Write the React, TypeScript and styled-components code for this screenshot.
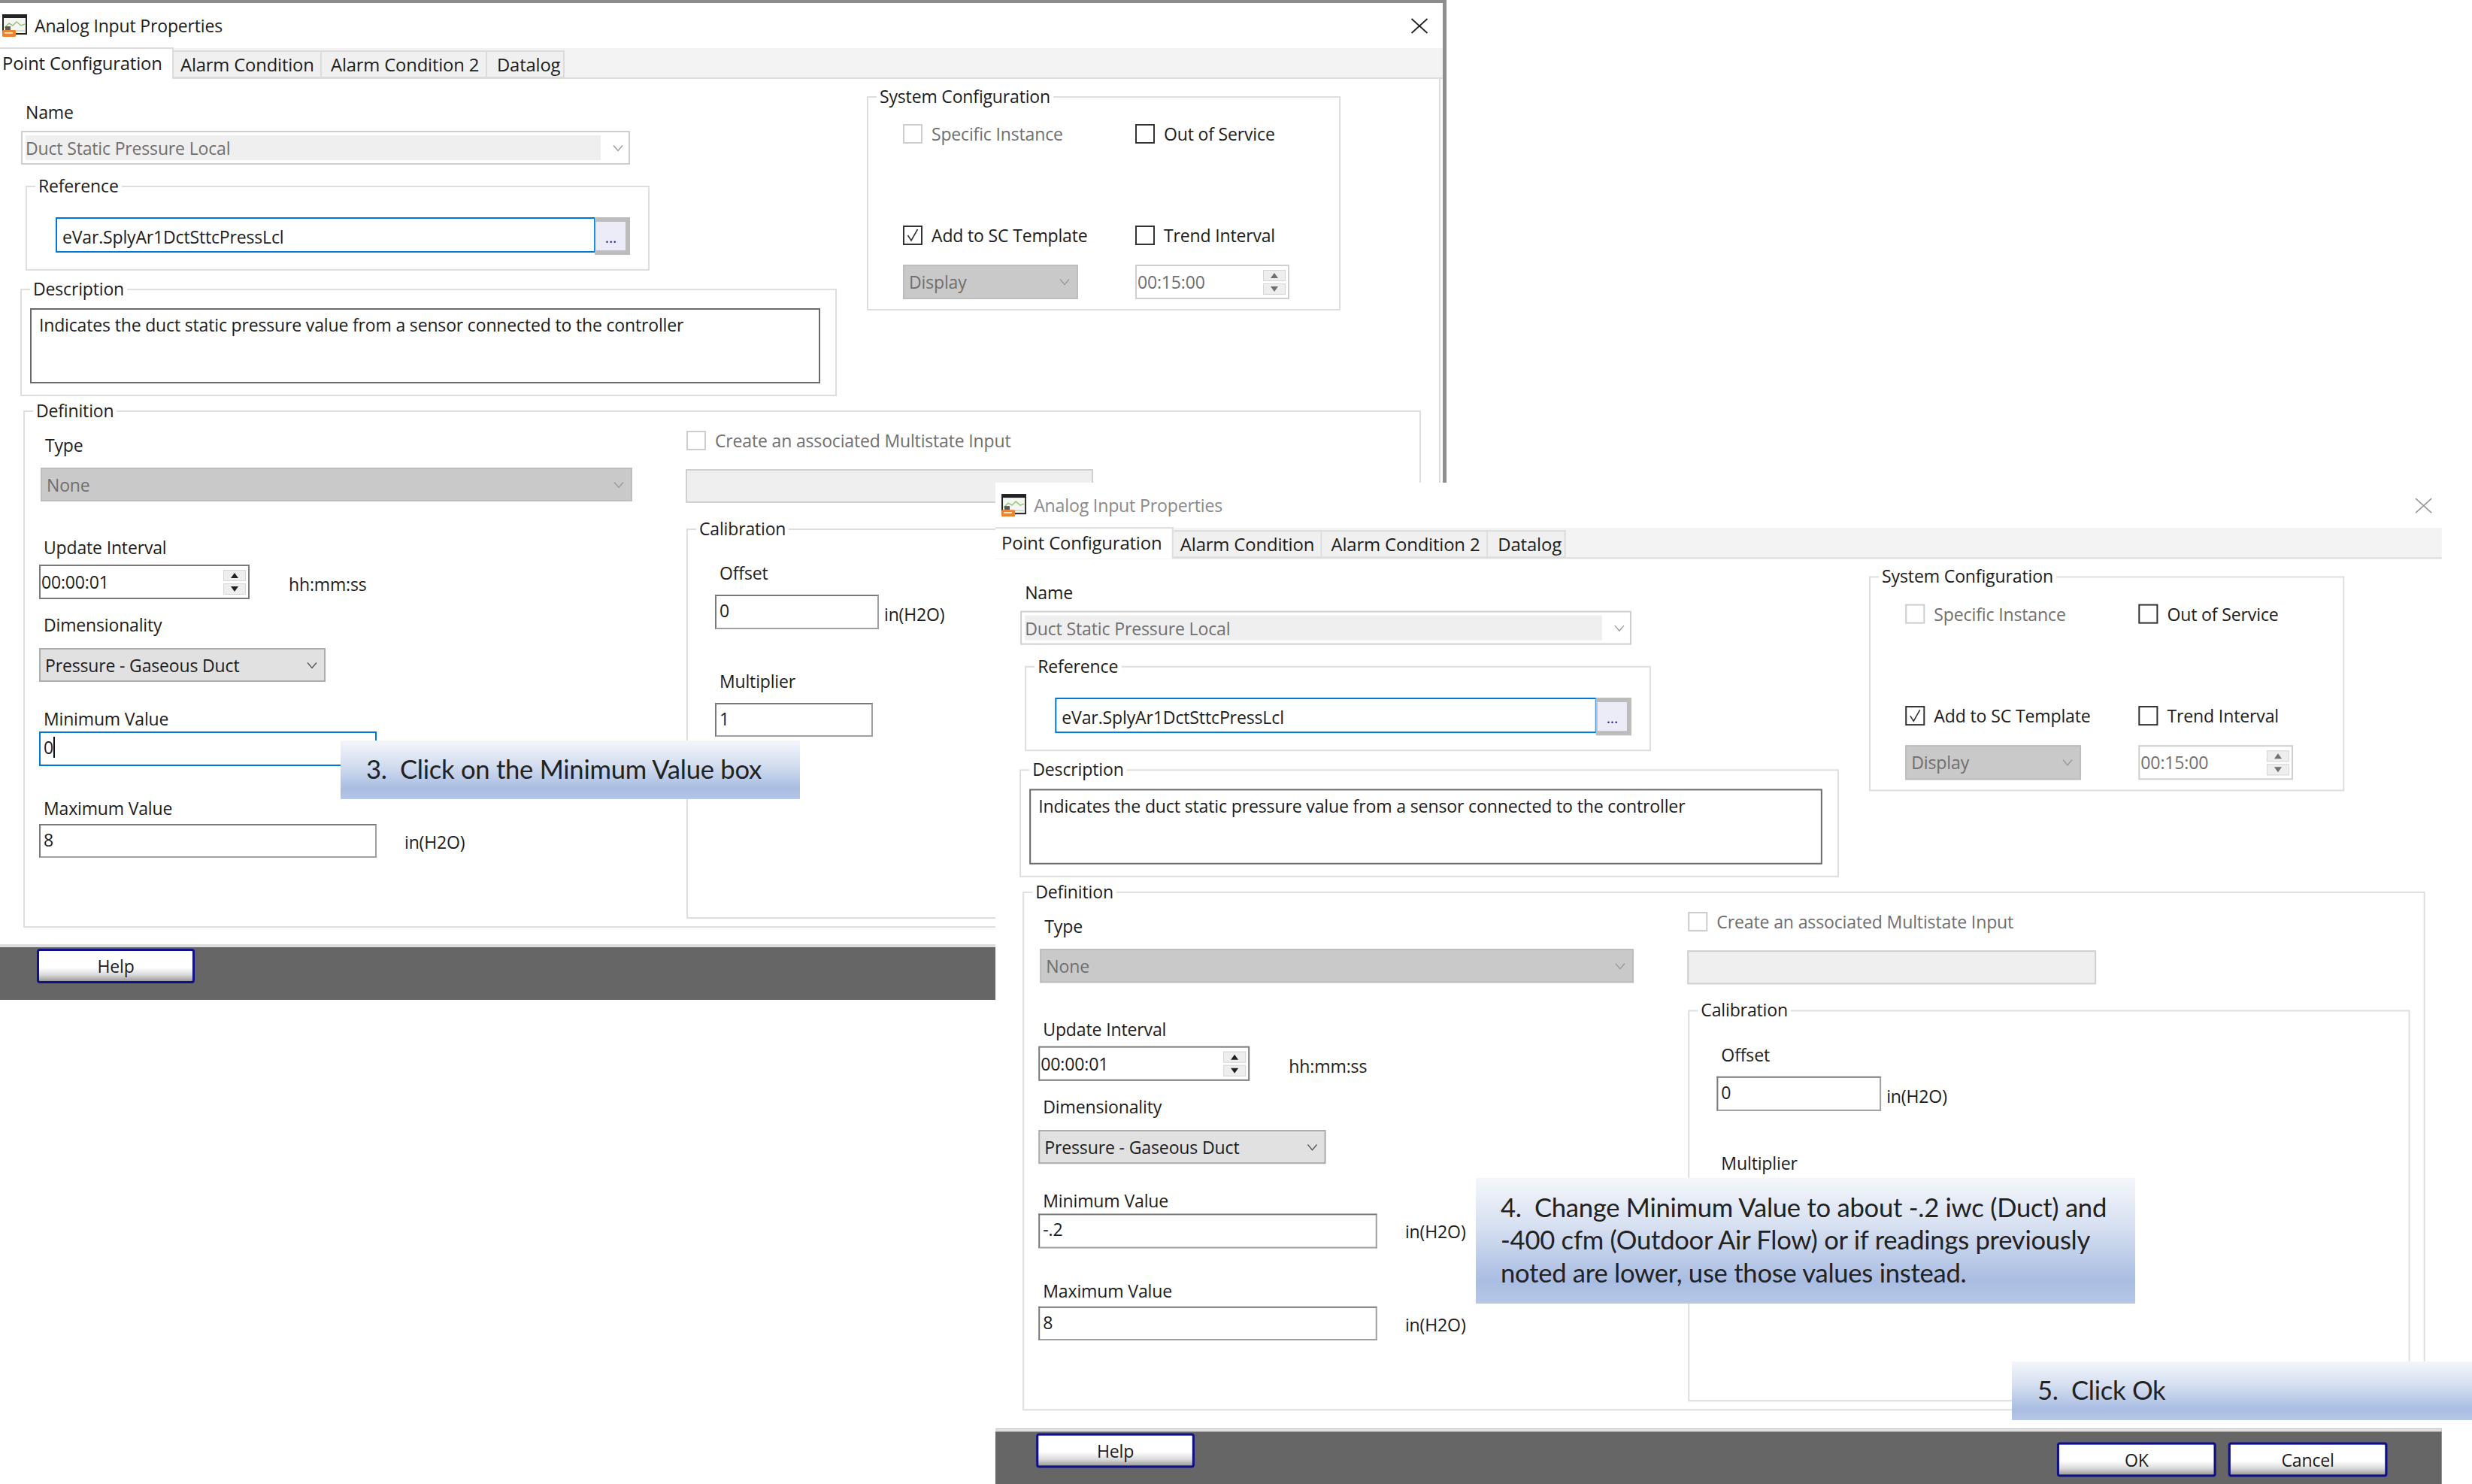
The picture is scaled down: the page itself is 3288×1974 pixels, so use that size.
import React from 'react';
import styled, { createGlobalStyle } from 'styled-components';

const UI_FONT = '"Open Sans", "Noto Sans", sans-serif';

const GlobalStyle = createGlobalStyle`
  html, body {
    margin: 0;
    background: #fff;
  }
`;

const Canvas = styled.div`
  position: relative;
  width: 3288px;
  height: 1974px;
  overflow: hidden;
  background: #fff;
  font-family: ${UI_FONT};
  font-size: 23px;
  letter-spacing: -0.16px;
  color: #1c1c1c;
`;

const Window = styled.div<{ $active: boolean }>`
  position: absolute;
  left: ${p => (p.$active ? '-5px' : '1324px')};
  top: ${p => (p.$active ? '0' : '642px')};
  width: ${p => (p.$active ? '1929px' : '1917px')};
  height: ${p => (p.$active ? '1330px' : '1328px')};
  box-sizing: border-box;
  display: flex;
  flex-direction: column;
  background: #fff;
  border-top: ${p => (p.$active ? '4px solid #8c8c8c' : 'none')};
  border-right: ${p => (p.$active ? '5px solid #8f8f8f' : 'none')};
  transform: ${p => (p.$active ? 'none' : 'scale(1.0035)')};
  transform-origin: top left;
`;

const TitleBar = styled.div<{ $active: boolean }>`
  flex: none;
  height: 60px;
  display: flex;
  align-items: center;
  padding: 0 ${p => (p.$active ? '19px' : '12px')} 0 8px;
  gap: 10px;
  box-sizing: border-box;
  color: ${p => (p.$active ? '#1c1c1c' : '#8a8a8a')};
`;

const TitleText = styled.span`
  flex: 1;
`;

const TabStrip = styled.div`
  flex: none;
  height: 41px;
  box-sizing: border-box;
  display: flex;
  align-items: flex-end;
  background: #f3f3f3;
  border-bottom: 2px solid #dcdcdc;
  font-size: 23.8px;
`;

const Tab = styled.div<{ $w: number; $pad: number; $selected?: boolean }>`
  box-sizing: border-box;
  flex: none;
  width: ${p => p.$w}px;
  height: ${p => (p.$selected ? '42px' : '37px')};
  margin-bottom: ${p => (p.$selected ? '-2px' : '-1px')};
  padding: 0 0 ${p => (p.$selected ? '3px' : '0')} ${p => p.$pad}px;
  display: flex;
  align-items: center;
  white-space: nowrap;
  background: ${p => (p.$selected ? '#fff' : '#f0f0f0')};
  border: 2px solid #dcdcdc;
  border-left-width: 0;
  border-bottom: ${p => (p.$selected ? 'none' : '2px solid #dcdcdc')};
`;

const Panel = styled.div<{ $active: boolean }>`
  flex: 1;
  min-height: 0;
  display: flex;
  flex-direction: column;
  border-right: ${p => (p.$active ? '2px solid #dcdcdc' : 'none')};
  margin-right: ${p => (p.$active ? '3px' : '0')};
  padding-left: 32px;
`;

const TopRow = styled.div`
  display: flex;
  align-items: flex-start;
`;

const LeftColumn = styled.div`
  flex: 0 0 1086px;
  display: flex;
  flex-direction: column;
`;

const Label = styled.div<{ $left?: number; $top?: number }>`
  line-height: 30px;
  height: 30px;
  white-space: nowrap;
  margin-left: ${p => p.$left ?? 0}px;
  margin-top: ${p => p.$top ?? 0}px;
`;

const Frame = styled.div<{ $w: number; $h: number; $left?: number; $top?: number }>`
  box-sizing: border-box;
  flex: none;
  width: ${p => p.$w}px;
  height: ${p => p.$h}px;
  margin-left: ${p => p.$left ?? 0}px;
  margin-top: ${p => p.$top ?? 0}px;
  border: 2px solid #dedede;
  display: flex;
  flex-direction: column;
`;

const Legend = styled.div`
  flex: none;
  width: fit-content;
  height: 30px;
  line-height: 30px;
  margin: -17px 0 1px 11px;
  padding: 0 4px;
  background: #fff;
`;

const ComboBox = styled.div<{ $w: number; $h?: number; $left?: number; $top?: number; $kind: 'name' | 'off' | 'on' }>`
  box-sizing: border-box;
  flex: none;
  width: ${p => p.$w}px;
  height: ${p => p.$h ?? 45}px;
  margin-left: ${p => p.$left ?? 0}px;
  margin-top: ${p => p.$top ?? 0}px;
  display: flex;
  align-items: center;
  padding: ${p => (p.$kind === 'name' ? '4px' : '0 6px')};
  background: ${p => (p.$kind === 'off' ? '#c9c9c9' : p.$kind === 'on' ? '#e1e1e1' : '#fff')};
  border: 2px solid ${p => (p.$kind === 'on' ? '#adadad' : p.$kind === 'off' ? '#bdbdbd' : '#cfcfcf')};
  color: ${p => (p.$kind === 'on' ? 'inherit' : '#6f6f6f')};
`;

const ComboValue = styled.div<{ $filled: boolean }>`
  flex: 1;
  align-self: stretch;
  display: flex;
  align-items: center;
  background: ${p => (p.$filled ? '#efefef' : 'transparent')};
  margin-right: ${p => (p.$filled ? '16px' : '8px')};
`;

const Chevron = styled.svg`
  flex: none;
  width: 14px;
  height: 10px;
  margin-right: 3px;
`;

const TextBox = styled.div<{ $w: number; $h?: number; $left?: number; $top?: number; $focus?: boolean }>`
  box-sizing: border-box;
  flex: none;
  width: ${p => p.$w}px;
  height: ${p => p.$h ?? 46}px;
  margin-left: ${p => p.$left ?? 0}px;
  margin-top: ${p => p.$top ?? 0}px;
  display: flex;
  align-items: center;
  padding: 0 0 4px 4px;
  background: #fff;
  border: 2px solid ${p => (p.$focus ? '#0078d7' : '#7a7a7a')};
  border-bottom-color: ${p => (p.$focus ? '#0078d7' : '#a0a0a0')};
  border-right-color: ${p => (p.$focus ? '#0078d7' : '#a0a0a0')};
`;

const ReferenceBox = styled(TextBox)`
  padding: 4px 0 0 7px;
`;

const Caret = styled.span`
  width: 2px;
  height: 28px;
  background: #111;
`;

const ReferenceRow = styled.div`
  display: flex;
  margin: 26px 0 0 38px;
`;

const BrowseButton = styled.div`
  box-sizing: border-box;
  width: 47px;
  height: 50px;
  margin-left: -1px;
  display: flex;
  align-items: flex-end;
  justify-content: center;
  padding-bottom: 8px;
  line-height: 18px;
  background: #ececf8;
  border: 6px solid #bcbcbc;
  border-left-width: 2px;
  color: #2222aa;
  font-size: 20px;
`;

const DescriptionBox = styled.div`
  box-sizing: border-box;
  width: 1051px;
  height: 100px;
  margin: 10px 0 0 11px;
  padding: 5px 10px;
  line-height: 30px;
  border: 2px solid #6a6a6a;
`;

const SystemGrid = styled.div`
  display: grid;
  grid-template-columns: 309px 205px;
  grid-template-rows: 135px 52px 46px;
  align-items: start;
  margin: 21px 0 0 46px;
`;

const CheckRow = styled.div<{ $muted?: boolean; $left?: number; $top?: number }>`
  display: flex;
  align-items: center;
  gap: 12px;
  height: 26px;
  white-space: nowrap;
  margin-left: ${p => p.$left ?? 0}px;
  margin-top: ${p => p.$top ?? 0}px;
  color: ${p => (p.$muted ? '#6f6f6f' : 'inherit')};
`;

const CheckBox = styled.div<{ $muted?: boolean }>`
  box-sizing: border-box;
  flex: none;
  width: 26px;
  height: 26px;
  display: flex;
  background: #fff;
  border: 2px solid ${p => (p.$muted ? '#cdcdcd' : '#333')};
  svg {
    width: 100%;
    height: 100%;
  }
`;

const SpinBox = styled.div<{ $w: number; $muted?: boolean }>`
  box-sizing: border-box;
  width: ${p => p.$w}px;
  height: 46px;
  flex: none;
  display: flex;
  align-items: center;
  justify-content: space-between;
  padding: 0 3px 0 1px;
  background: #fff;
  border: 2px solid ${p => (p.$muted ? '#cfcfcf' : '#7a7a7a')};
  color: ${p => (p.$muted ? '#6f6f6f' : 'inherit')};
`;

const SpinButtons = styled.div`
  display: flex;
  flex-direction: column;
  gap: 3px;
`;

const SpinButton = styled.div<{ $down?: boolean; $muted?: boolean }>`
  box-sizing: border-box;
  width: 30px;
  height: 15px;
  display: flex;
  align-items: center;
  justify-content: center;
  background: #eeeeee;
  border: 1px solid #d6d6d6;
  &::after {
    content: '';
    border-left: 5px solid transparent;
    border-right: 5px solid transparent;
    border-${p => (p.$down ? 'top' : 'bottom')}: 7px solid ${p => (p.$muted ? '#707070' : '#222')};
  }
`;

const Definition = styled(Frame)`
  margin-top: 19px;
  margin-left: 4px;
`;

const DefinitionBody = styled.div`
  display: flex;
  flex: 1;
  min-height: 0;
`;

const DefinitionLeft = styled.div`
  box-sizing: border-box;
  flex: 0 0 879px;
  padding-left: 19px;
  display: flex;
  flex-direction: column;
`;

const DefinitionRight = styled.div`
  flex: 1;
  display: flex;
  flex-direction: column;
`;

const DisabledField = styled.div`
  box-sizing: border-box;
  width: 542px;
  height: 45px;
  margin-top: 25px;
  background: #efefef;
  border: 2px solid #d0d0d0;
`;

const FieldRow = styled.div<{ $top?: number; $gap: number; $left?: number }>`
  display: flex;
  align-items: center;
  gap: ${p => p.$gap}px;
  margin-top: ${p => p.$top ?? 0}px;
  margin-left: ${p => p.$left ?? 0}px;
`;

const Unit = styled.span<{ $drop: number }>`
  white-space: nowrap;
  padding-top: ${p => p.$drop}px;
`;

const Footer = styled.div`
  flex: none;
  height: 74px;
  box-sizing: border-box;
  display: flex;
  align-items: flex-start;
  background: #666;
  border-top: 4px solid #dedede;
  padding-left: 54px;
`;

const DialogButton = styled.div<{ $w: number; $top: number; $left?: number }>`
  box-sizing: border-box;
  flex: none;
  width: ${p => p.$w}px;
  height: 46px;
  margin-top: ${p => p.$top}px;
  margin-left: ${p => p.$left ?? 0}px;
  display: flex;
  align-items: center;
  justify-content: center;
  background: linear-gradient(#ffffff 0%, #ffffff 55%, #d8d8d8 80%, #9c9c9c 100%);
  border: 3px solid #10108a;
  border-radius: 4px;
`;

const Callout = styled.div<{ $x: number; $y: number; $w: number; $h: number; $pad: number }>`
  position: absolute;
  left: ${p => p.$x}px;
  top: ${p => p.$y}px;
  width: ${p => p.$w}px;
  height: ${p => p.$h}px;
  box-sizing: border-box;
  display: flex;
  flex-direction: column;
  justify-content: center;
  padding: 0 0 3px ${p => p.$pad}px;
  font-family: Lato, "Liberation Sans", sans-serif;
  font-size: 34.6px;
  line-height: 43.5px;
  letter-spacing: -0.25px;
  white-space: pre;
  color: #222;
  background: linear-gradient(#f4f6fb 0%, #d5dff0 40%, #a9bde2 82%, #b6c7e7 100%);
`;

const ChevronIcon = ({ color }: { color: string }) => (
  <Chevron viewBox="0 0 14 10">
    <path d="M1 1.5 L7 8.5 L13 1.5" fill="none" stroke={color} strokeWidth="1.4" />
  </Chevron>
);

const Combo = ({
  value,
  kind,
  ...rest
}: {
  value?: string;
  kind: 'name' | 'off' | 'on';
  $w: number;
  $h?: number;
  $left?: number;
  $top?: number;
}) => (
  <ComboBox $kind={kind} {...rest}>
    <ComboValue $filled={kind === 'name'}>{value}</ComboValue>
    <ChevronIcon color={kind === 'on' ? '#555' : '#9a9a9a'} />
  </ComboBox>
);

const Check = ({
  label,
  checked,
  muted,
  ...rest
}: {
  label: string;
  checked?: boolean;
  muted?: boolean;
  $left?: number;
  $top?: number;
}) => (
  <CheckRow $muted={muted} {...rest}>
    <CheckBox $muted={muted}>
      {checked && (
        <svg viewBox="0 0 22 22">
          <path d="M4.5 11 L9 18 L17.5 3" fill="none" stroke="#333" strokeWidth="1.6" />
        </svg>
      )}
    </CheckBox>
    {label}
  </CheckRow>
);

const Spinner = ({ value, w, muted }: { value: string; w: number; muted?: boolean }) => (
  <SpinBox $w={w} $muted={muted}>
    {value}
    <SpinButtons>
      <SpinButton $muted={muted} />
      <SpinButton $down $muted={muted} />
    </SpinButtons>
  </SpinBox>
);

const AppIcon = () => (
  <svg width="33" height="30" viewBox="0 0 33 30" style={{ flex: 'none' }}>
    <rect x="1" y="1" width="31" height="25" fill="#f4f6f2" stroke="#222" strokeWidth="2" />
    <rect x="1" y="1" width="31" height="4" fill="#222" />
    <path d="M3 18 L9 12 L14 15 L19 10 L25 15 L30 13" fill="none" stroke="#9cc27a" strokeWidth="1.5" />
    <path d="M3 22 H30" stroke="#c9d3c0" strokeWidth="1.5" />
    <rect x="0" y="21" width="18" height="9" rx="1.5" fill="#f0832a" />
    <rect x="4" y="16" width="7" height="5" fill="#5b5b5b" />
    <rect x="3" y="24" width="11" height="1.6" fill="#fff" />
  </svg>
);

const CloseIcon = ({ color }: { color: string }) => (
  <svg width="24" height="21" viewBox="0 0 24 21">
    <path d="M1.5 1 L22.5 20 M22.5 1 L1.5 20" fill="none" stroke={color} strokeWidth="1.7" />
  </svg>
);

const Dialog = ({ active, minValue }: { active: boolean; minValue: string }) => (
  <Window $active={active}>
    <TitleBar $active={active}>
      <AppIcon />
      <TitleText>Analog Input Properties</TitleText>
      <CloseIcon color={active ? '#222' : '#9a9a9a'} />
    </TitleBar>
    <TabStrip>
      <Tab $w={236} $pad={8} $selected>Point Configuration</Tab>
      <Tab $w={197} $pad={9}>Alarm Condition</Tab>
      <Tab $w={220} $pad={12}>Alarm Condition 2</Tab>
      <Tab $w={103} $pad={13}>Datalog</Tab>
    </TabStrip>
    <Panel $active={active}>
      <TopRow>
        <LeftColumn>
          <Label $left={7} $top={29}>Name</Label>
          <Combo kind="name" value="Duct Static Pressure Local" $w={810} $left={1} $top={10} />
          <Frame $w={830} $h={113} $left={7} $top={28}>
            <Legend>Reference</Legend>
            <ReferenceRow>
              <ReferenceBox $w={718} $h={47} $focus>eVar.SplyAr1DctSttcPressLcl</ReferenceBox>
              <BrowseButton>...</BrowseButton>
            </ReferenceRow>
          </Frame>
          <Frame $w={1086} $h={143} $top={24}>
            <Legend>Description</Legend>
            <DescriptionBox>Indicates the duct static pressure value from a sensor connected to the controller</DescriptionBox>
          </Frame>
        </LeftColumn>
        <Frame $w={630} $h={285} $left={40} $top={23}>
          <Legend>System Configuration</Legend>
          <SystemGrid>
            <Check muted label="Specific Instance" />
            <Check label="Out of Service" />
            <Check checked label="Add to SC Template" />
            <Check label="Trend Interval" />
            <Combo kind="off" value="Display" $w={233} $h={46} />
            <Spinner muted value="00:15:00" w={205} />
          </SystemGrid>
        </Frame>
      </TopRow>
      <Definition $w={1859} $h={688}>
        <Legend>Definition</Legend>
        <DefinitionBody>
          <DefinitionLeft>
            <Label $left={8} $top={15}>Type</Label>
            <Combo kind="off" value="None" $w={787} $left={2} $top={15} />
            <Label $left={6} $top={46}>Update Interval</Label>
            <FieldRow $top={8} $gap={52}>
              <Spinner value="00:00:01" w={280} />
              <Unit $drop={6}>hh:mm:ss</Unit>
            </FieldRow>
            <Label $left={6} $top={19}>Dimensionality</Label>
            <Combo kind="on" value="Pressure - Gaseous Duct" $w={381} $top={16} />
            <Label $left={6} $top={34}>Minimum Value</Label>
            <FieldRow $top={2} $gap={37}>
              {active ? (
                <TextBox $w={449} $focus>
                  {minValue}
                  <Caret />
                </TextBox>
              ) : (
                <>
                  <TextBox $w={449}>{minValue}</TextBox>
                  <Unit $drop={0}>in(H2O)</Unit>
                </>
              )}
            </FieldRow>
            <Label $left={6} $top={41}>Maximum Value</Label>
            <FieldRow $top={6} $gap={37}>
              <TextBox $w={449} $h={45}>8</TextBox>
              <Unit $drop={2}>in(H2O)</Unit>
            </FieldRow>
          </DefinitionLeft>
          <DefinitionRight>
            <Check muted label="Create an associated Multistate Input" $top={11} $left={1} />
            <DisabledField />
            <Frame $w={957} $h={519} $left={1} $top={34}>
              <Legend>Calibration</Legend>
              <Label $left={42} $top={28}>Offset</Label>
              <FieldRow $top={14} $gap={7} $left={36}>
                <TextBox $w={218}>0</TextBox>
                <Unit $drop={6}>in(H2O)</Unit>
              </FieldRow>
              <Label $left={42} $top={54}>Multiplier</Label>
              <TextBox $w={210} $h={45} $left={36} $top={14}>{active ? '1' : ''}</TextBox>
            </Frame>
          </DefinitionRight>
        </DefinitionBody>
      </Definition>
    </Panel>
    <Footer>
      <DialogButton $w={210} $top={2}>Help</DialogButton>
      <DialogButton $w={211} $top={14} $left={1143}>OK</DialogButton>
      <DialogButton $w={211} $top={14} $left={16}>Cancel</DialogButton>
    </Footer>
  </Window>
);

export default function App() {
  return (
    <>
      <GlobalStyle />
      <Canvas>
        <Dialog active minValue="0" />
        <Dialog active={false} minValue="-.2" />
        <Callout $x={453} $y={985} $w={611} $h={78} $pad={34}>{'3.  Click on the Minimum Value box'}</Callout>
        <Callout $x={1963} $y={1567} $w={877} $h={167} $pad={33}>
          <span>{'4.  Change Minimum Value to about -.2 iwc (Duct) and'}</span>
          <span>{'-400 cfm (Outdoor Air Flow) or if readings previously'}</span>
          <span>{'noted are lower, use those values instead.'}</span>
        </Callout>
        <Callout $x={2676} $y={1811} $w={612} $h={78} $pad={34}>{'5.  Click Ok'}</Callout>
      </Canvas>
    </>
  );
}
